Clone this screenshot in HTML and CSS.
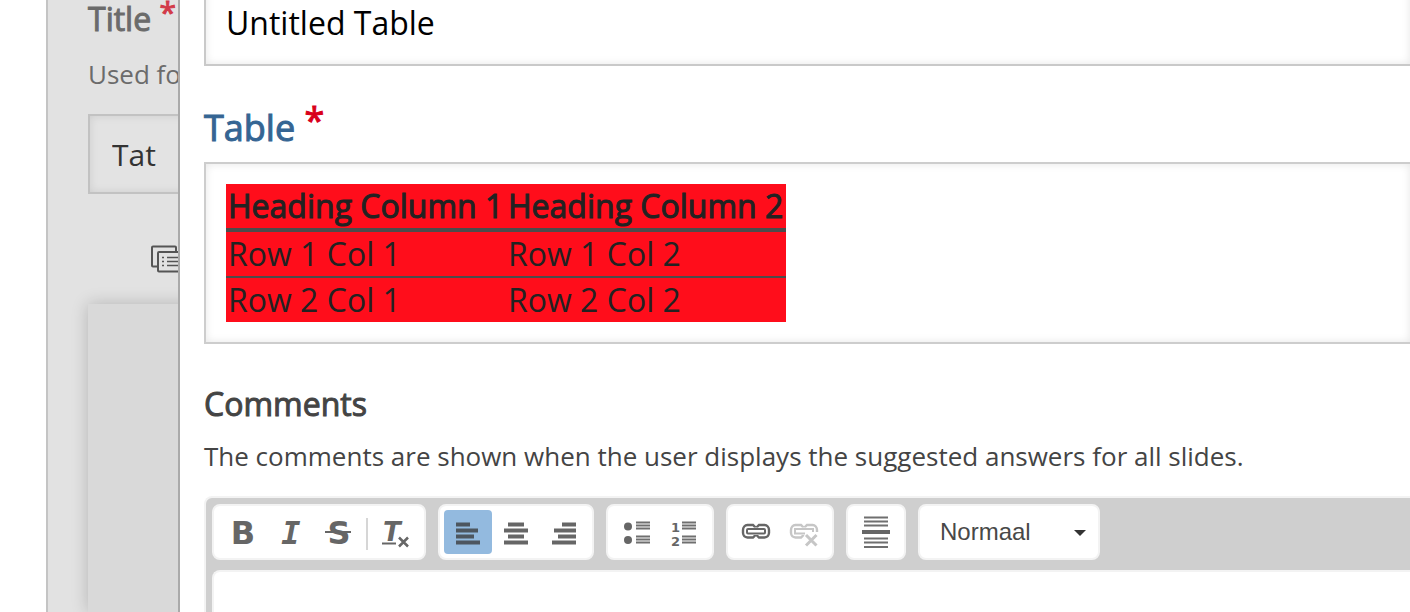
FILE: index.html
```html
<!DOCTYPE html>
<html lang="en">
<head>
  <meta charset="UTF-8">
  <meta name="viewport" content="width=device-width, initial-scale=1.0">
  <title>Edit table</title>
  <link rel="stylesheet" href="styles.css">
</head>
<body>
  <div class="page">
    <form class="back-form">
      <label class="label" for="title">Title <span class="required">*</span></label>
      <p class="description">Used for</p>
      <input class="text-input" type="text" id="title" value="Tat">
      <svg class="slides-icon" width="36" height="28" viewBox="0 0 36 28" fill="none" stroke="#555" stroke-width="2">
        <rect x="1" y="1.500" width="24" height="20" rx="1"/>
        <rect x="7" y="7" width="28" height="19.500" rx="1" fill="#e2e2e2"/>
        <path d="M11 12.500h2M11 16.500h2M11 20.500h2M16 12.500h14M16 16.500h14M16 20.500h14" stroke-width="1.500"/>
      </svg>
      <div class="preview"></div>
    </form>

    <form class="dialog">
      <input class="text-input table-title" type="text" aria-label="Table title" value="Untitled Table">

      <h2 class="table-label">Table <span class="required">*</span></h2>
      <div class="table-box">
        <table class="table">
          <thead>
            <tr><th>Heading Column 1</th><th>Heading Column 2</th></tr>
          </thead>
          <tbody>
            <tr><td>Row 1 Col 1</td><td>Row 1 Col 2</td></tr>
            <tr><td>Row 2 Col 1</td><td>Row 2 Col 2</td></tr>
          </tbody>
        </table>
      </div>

      <label class="label" for="comments">Comments</label>
      <p class="description">The comments are shown when the user displays the suggested answers for all slides.</p>

      <div class="editor">
        <div class="toolbar">
          <div class="group">
            <button type="button" class="tool bold" aria-label="Bold">B</button>
            <button type="button" class="tool italic" aria-label="Italic">I</button>
            <button type="button" class="tool strike" aria-label="Strikethrough">S</button>
            <span class="separator"></span>
            <button type="button" class="tool" aria-label="Remove format">
              <svg width="48" height="44" viewBox="0 0 48 44">
                <text class="format-letter" x="11" y="31">T</text>
                <path d="M10 33.500h14" stroke="#666" stroke-width="2"/>
                <path d="M27 27.500l9 9M36 27.500l-9 9" stroke="#666" stroke-width="2.500"/>
              </svg>
            </button>
          </div>
          <div class="group">
            <button type="button" class="tool active" aria-label="Align left">
              <svg width="48" height="44" viewBox="0 0 48 44" fill="#4d565f">
                <path d="M12 12.500h14v4H12zM12 18.500h22v4H12zM12 24.500h18v4H12zM12 30.500h24v4H12z"/>
              </svg>
            </button>
            <button type="button" class="tool" aria-label="Center">
              <svg width="48" height="44" viewBox="0 0 48 44" fill="#666">
                <path d="M16 12.500h16v4H16zM12 18.500h24v4H12zM16 24.500h16v4H16zM12 30.500h24v4H12z"/>
              </svg>
            </button>
            <button type="button" class="tool" aria-label="Align right">
              <svg width="48" height="44" viewBox="0 0 48 44" fill="#666">
                <path d="M22 12.500h14v4H22zM14 18.500h22v4H14zM18 24.500h18v4H18zM12 30.500h24v4H12z"/>
              </svg>
            </button>
          </div>
          <div class="group">
            <button type="button" class="tool" aria-label="Bulleted list">
              <svg width="48" height="44" viewBox="0 0 48 44" fill="#666">
                <circle cx="16" cy="16.500" r="4"/>
                <circle cx="16" cy="30" r="4"/>
                <path d="M24 12.500h14M24 15.500h14M24 18.500h14M24 26.500h14M24 29.500h14M24 32.500h14" stroke="#6f6f6f" stroke-width="1.800"/>
              </svg>
            </button>
            <button type="button" class="tool" aria-label="Numbered list">
              <svg width="48" height="44" viewBox="0 0 48 44" fill="#666">
                <text class="list-number" x="11" y="22">1</text>
                <text class="list-number" x="11" y="36">2</text>
                <path d="M22 12.500h14M22 15.500h14M22 18.500h14M22 26.500h14M22 29.500h14M22 32.500h14" stroke="#6f6f6f" stroke-width="1.800"/>
              </svg>
            </button>
          </div>
          <div class="group">
            <button type="button" class="tool" aria-label="Link">
              <svg width="48" height="44" viewBox="0 0 48 44" fill="none" stroke="#666">
                <path d="M23 17.500V17l-2-2h-5.500a5 5 0 0 0-4.500 5v3a5 5 0 0 0 4.500 4.500H21l2-2v-.500M25 17.500V17l2-2h5.500a5 5 0 0 1 4.500 5v3a5 5 0 0 1-4.500 4.500H27l-2-2v-.500" stroke-width="2.400"/>
                <rect x="15" y="19" width="18" height="4.500" rx="1" stroke-width="2"/>
              </svg>
            </button>
            <button type="button" class="tool" aria-label="Unlink" disabled>
              <svg width="48" height="44" viewBox="0 0 48 44" fill="none" stroke="#c6c6c6">
                <path d="M23 17.500V17l-2-2h-5.500a5 5 0 0 0-4.500 5v3a5 5 0 0 0 4.500 4.500H21l2-2v-.500M25 17.500V17l2-2h5.500a5 5 0 0 1 4.500 5v2" stroke-width="2.400"/>
                <path d="M25 23.500H15V19h18v3" stroke-width="2"/>
                <path d="M26 25l10.500 10.500M36.500 25L26 35.500" stroke-width="3"/>
              </svg>
            </button>
          </div>
          <div class="group">
            <button type="button" class="tool" aria-label="Horizontal line">
              <svg width="48" height="44" viewBox="0 0 48 44" stroke="#6f6f6f" stroke-width="2">
                <path d="M12 7.500h24M12 11.500h24M12 15.500h24M12 28.500h24M12 32.500h24M12 37h24"/>
                <path d="M10 22h28" stroke="#666" stroke-width="4"/>
              </svg>
            </button>
          </div>
          <div class="group format">
            <select class="format-select" aria-label="Paragraph format">
              <option>Normaal</option>
            </select>
            <span class="caret"></span>
          </div>
        </div>
        <textarea class="editor-content" id="comments"></textarea>
      </div>
    </form>
  </div>
</body>
</html>
```
FILE: styles.css
```css
* {
  box-sizing: border-box;
}
body {
  margin: 0;
  background-color: #fff;
  font-family: "Open Sans", sans-serif;
  color: #444;
}
.page {
  position: relative;
  height: 100vh;
  padding-left: 46px;
  overflow: hidden;
}
.back-form {
  display: flex;
  flex-direction: column;
  height: 100%;
  padding-left: 40px;
  border-left: 2px solid #c4c4c4;
  background-color: #e2e2e2;
}
.label {
  display: block;
  font-size: 32px;
  line-height: 40px;
  -webkit-text-stroke: 1px currentColor;
}
.description {
  margin: 16px 0 24px;
  font-size: 26px;
  line-height: 32px;
  white-space: nowrap;
}
.required {
  color: #d9001b;
  line-height: 0;
  vertical-align: 8px;
}
.text-input {
  display: block;
  width: 100%;
  height: 80px;
  padding: 0 20px;
  border: 2px solid #c9c9c9;
  border-right: 0;
  box-shadow: inset 0 0 8px rgba(0, 0, 0, 0.1);
  background-color: #fff;
  color: #000;
  font-family: inherit;
  font-size: 32px;
}
.back-form .label {
  line-height: 38px;
  color: #6b6b6b;
}
.back-form .required {
  color: #d23a48;
  font-size: 30px;
}
.back-form .description {
  margin-top: 20px;
  color: #6b6b6b;
}
.back-form .text-input {
  padding: 0 22px;
  border-color: #c2c2c2;
  background-color: #e3e3e3;
  color: #333;
  font-size: 30px;
}
.slides-icon {
  flex: none;
  margin: 51px 0 31px 63px;
}
.preview {
  flex: 1;
  background-color: #d9d9d9;
  box-shadow: 0 0 16px rgba(0, 0, 0, 0.2);
}

/* Dialog on top of the form */
.dialog {
  position: absolute;
  top: -22px;
  right: 0;
  bottom: 0;
  left: 178px;
  display: flex;
  flex-direction: column;
  padding-left: 24px;
  border-left: 2px solid #aaa;
  background-color: #fff;
}
.table-title {
  flex: none;
  height: 88px;
}
.table-label {
  margin: 38px 0 10px;
  color: #356593;
  font-size: 36px;
  font-weight: normal;
  line-height: 48px;
  -webkit-text-stroke: 1px currentColor;
}
.table-box {
  margin-bottom: 40px;
  padding: 20px;
  border: 2px solid #cdcdcd;
  border-right: 0;
  box-shadow: inset 0 0 8px rgba(0, 0, 0, 0.1);
}
.table {
  min-width: 560px;
  border-spacing: 0;
  background-color: #ff0d1b;
  color: #222;
  font-size: 32px;
  line-height: 40px;
}
.table th,
.table td {
  width: 50%;
  padding: 2px;
  text-align: left;
}
.table th {
  border-bottom: 4px solid #4c4c4c;
  font-weight: normal;
  -webkit-text-stroke: 1px currentColor;
}
.table tr + tr td {
  border-top: 2px solid #4c4c4c;
}

/* Editor */
.editor {
  display: flex;
  flex: 1;
  flex-direction: column;
  border: 2px solid #f3f3f3;
  border-width: 2px 0 0 2px;
  border-radius: 8px 0 0 0;
  background-color: #cfcfcf;
}
.toolbar {
  display: flex;
  gap: 12px;
  padding: 6px 6px 10px;
}
.group {
  display: flex;
  height: 56px;
  padding: 4px;
  border: 2px solid #f3f3f3;
  border-radius: 8px;
  background-color: #fff;
}
.tool {
  width: 48px;
  height: 44px;
  padding: 0;
  border: 0;
  border-radius: 4px;
  background: none;
  color: #666;
  font: bold 32px/46px "DejaVu Sans", sans-serif;
  text-align: center;
}
.tool svg {
  display: block;
}
.bold,
.italic,
.strike {
  padding-left: 2px;
}
.active {
  background-color: #93badf;
}
.italic {
  font-family: "DejaVu Sans Mono", monospace;
  font-style: italic;
}
.strike {
  background: linear-gradient(#666, #666) center / 26px 2px no-repeat;
}
.separator {
  width: 2px;
  margin: 8px 4px 4px;
  background-color: #d6d6d6;
}
.format-letter {
  fill: #666;
  font: italic bold 26px "DejaVu Sans", sans-serif;
}
.list-number {
  font: bold 13px "DejaVu Sans", sans-serif;
}
.format {
  position: relative;
  width: 182px;
}
.format-select {
  width: 100%;
  padding: 0 16px 2px;
  border: 0;
  appearance: none;
  background: none;
  color: #484848;
  font: 24px "Liberation Sans", Arial, sans-serif;
}
.caret {
  position: absolute;
  top: 24px;
  right: 12px;
  border: 6px solid transparent;
  border-top-color: #333;
  border-bottom: 0;
  pointer-events: none;
}
.editor-content {
  flex: 1;
  min-height: 0;
  margin-left: 6px;
  border: 2px solid #f3f3f3;
  border-width: 2px 0 0 2px;
  border-radius: 8px 0 0 0;
  background-color: #fff;
  resize: none;
}
```
